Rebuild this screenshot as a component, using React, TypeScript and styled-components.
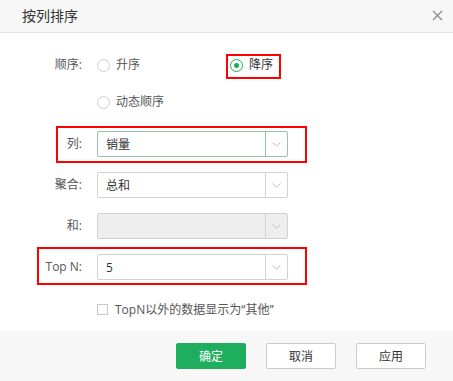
import React from "react";
import styled, { createGlobalStyle } from "styled-components";

const GlobalStyle = createGlobalStyle`
  html, body { margin: 0; padding: 0; background: #fff; }
  body {
    font-family: "Open Sans", "Noto Sans CJK SC", sans-serif;
    -webkit-font-smoothing: antialiased;
  }
  * { box-sizing: border-box; }
`;

const GREEN = "#1eae5e";

const Dialog = styled.div`
  width: 453px;
  height: 381px;
  display: flex;
  flex-direction: column;
  background: #fff;
  overflow: hidden;
`;

const Header = styled.div`
  height: 33px;
  flex: none;
  background: #f7f7f7;
  border-bottom: 1px solid #e4e4e4;
  display: flex;
  align-items: center;
  justify-content: space-between;
  padding: 0 10px 1px 22px;
`;

const Title = styled.div`
  font-size: 14px;
  line-height: 20px;
  color: #333;
`;

const Close = styled.button`
  width: 12px;
  height: 12px;
  padding: 0;
  border: 0;
  background: none;
  display: flex;
  align-items: center;
  justify-content: center;
  cursor: pointer;
`;

const Body = styled.div`
  flex: 1;
  padding-top: 19px;
  display: flex;
  flex-direction: column;
`;

const Row = styled.div<{ $top: number; $h?: number }>`
  position: relative;
  display: grid;
  grid-template-columns: 82px 191px;
  column-gap: 15px;
  align-items: center;
  margin-top: ${(p) => p.$top}px;
  height: ${(p) => p.$h ?? 26}px;
`;

const Highlight = styled.div<{ $l: number; $w: number; $t: number; $b: number }>`
  position: absolute;
  left: ${(p) => p.$l}px;
  width: ${(p) => p.$w}px;
  top: ${(p) => p.$t}px;
  bottom: ${(p) => p.$b}px;
  border: 2px solid #f00;
  pointer-events: none;
`;

const Label = styled.div`
  text-align: right;
  font-size: 12px;
  line-height: 16px;
  color: #555;
`;

const RadioGroup = styled.div`
  display: flex;
  align-items: center;
`;

const Option = styled.label<{ $w?: number }>`
  position: relative;
  display: inline-flex;
  align-items: center;
  gap: 6px;
  height: 26px;
  width: ${(p) => (p.$w ? `${p.$w}px` : "auto")};
  font-size: 12px;
  color: #555;
  cursor: pointer;
`;

const OptionMark = styled.span<{ $on?: boolean }>`
  position: absolute;
  left: -4px;
  right: -8px;
  top: 2px;
  bottom: -1px;
  border: 2px solid #f00;
  pointer-events: none;
`;

const RadioCircle = styled.span<{ $on?: boolean }>`
  width: 13px;
  height: 13px;
  border-radius: 50%;
  border: 1px solid ${(p) => (p.$on ? GREEN : "#cfcfcf")};
  background: #fff;
  display: inline-flex;
  align-items: center;
  justify-content: center;
  flex: none;
  &::after {
    content: "";
    width: 5px;
    height: 5px;
    border-radius: 50%;
    background: ${(p) => (p.$on ? GREEN : "transparent")};
  }
`;

const OptionText = styled.span<{ $dark?: boolean }>`
  line-height: 16px;
  color: ${(p) => (p.$dark ? "#333" : "#555")};
`;

const Select = styled.div<{ $focus?: boolean; $disabled?: boolean }>`
  height: 26px;
  width: 191px;
  display: flex;
  border: 1px solid ${(p) => (p.$focus ? "#8ec9a6" : "#d2d2d2")};
  border-radius: 2px;
  background: ${(p) => (p.$disabled ? "#eeeeee" : "#fff")};
`;

const SelectValue = styled.div`
  flex: 1;
  padding-left: 8px;
  display: flex;
  align-items: center;
  font-size: 12px;
  color: #333;
`;

const Arrow = styled.div<{ $focus?: boolean }>`
  width: 22px;
  flex: none;
  border-left: 1px solid ${(p) => (p.$focus ? "#8ec9a6" : "#d2d2d2")};
  display: flex;
  align-items: center;
  justify-content: center;
`;

const CheckRow = styled.label`
  display: flex;
  align-items: center;
  gap: 7px;
  font-size: 12px;
  color: #555;
  white-space: nowrap;
`;

const CheckBox = styled.span`
  width: 11px;
  height: 11px;
  border: 1px solid #c8c8c8;
  background: #fff;
  flex: none;
`;

const Footer = styled.div`
  height: 50px;
  flex: none;
  background: #f7f7f7;
  display: flex;
  align-items: center;
  justify-content: flex-end;
  gap: 20px;
  padding-right: 27px;
`;

const Button = styled.button<{ $primary?: boolean }>`
  width: 70px;
  height: 26px;
  border-radius: 2px;
  border: 1px solid ${(p) => (p.$primary ? GREEN : "#cccccc")};
  background: ${(p) => (p.$primary ? GREEN : "#fff")};
  color: ${(p) => (p.$primary ? "#fff" : "#333")};
  font-family: "Open Sans", "Noto Sans CJK SC", sans-serif;
  font-size: 12px;
  padding: 0;
  cursor: pointer;
`;

const Chevron = () => (
  <svg width="9" height="5" viewBox="0 0 9 5">
    <path d="M0.5 0.5 L4.5 4.2 L8.5 0.5" fill="none" stroke="#bdbdbd" strokeWidth="1" />
  </svg>
);

const CloseIcon = () => (
  <svg width="11" height="11" viewBox="0 0 11 11">
    <path d="M1 1 L10 10 M10 1 L1 10" stroke="#8a8a8a" strokeWidth="1.2" />
  </svg>
);

type SelProps = { value?: string; focus?: boolean; disabled?: boolean };
const SelectBox = ({ value, focus, disabled }: SelProps) => (
  <Select $focus={focus} $disabled={disabled}>
    <SelectValue>{value}</SelectValue>
    <Arrow $focus={focus}>
      <Chevron />
    </Arrow>
  </Select>
);

export default function App() {
  return (
    <>
      <GlobalStyle />
      <Dialog>
        <Header>
          <Title>按列排序</Title>
          <Close aria-label="close">
            <CloseIcon />
          </Close>
        </Header>
        <Body>
          <Row $top={0}>
            <Label>顺序:</Label>
            <RadioGroup>
              <Option $w={133}>
                <RadioCircle />
                <OptionText>升序</OptionText>
              </Option>
              <Option>
                <RadioCircle $on />
                <OptionText $dark>降序</OptionText>
                <OptionMark />
              </Option>
            </RadioGroup>
          </Row>
          <Row $top={11}>
            <span />
            <RadioGroup>
              <Option>
                <RadioCircle />
                <OptionText>动态顺序</OptionText>
              </Option>
            </RadioGroup>
          </Row>
          <Row $top={16}>
            <Label>列:</Label>
            <SelectBox value="销量" focus />
            <Highlight $l={56} $w={251} $t={-5} $b={-6} />
          </Row>
          <Row $top={15}>
            <Label>聚合:</Label>
            <SelectBox value="总和" />
          </Row>
          <Row $top={15}>
            <Label>和:</Label>
            <SelectBox disabled />
          </Row>
          <Row $top={15}>
            <Label>Top N:</Label>
            <SelectBox value="5" />
            <Highlight $l={37} $w={270} $t={-7} $b={-5} />
          </Row>
          <Row $top={16}>
            <span />
            <CheckRow>
              <CheckBox />
              <span>TopN以外的数据显示为“其他”</span>
            </CheckRow>
          </Row>
        </Body>
        <Footer>
          <Button $primary>确定</Button>
          <Button>取消</Button>
          <Button>应用</Button>
        </Footer>
      </Dialog>
    </>
  );
}
